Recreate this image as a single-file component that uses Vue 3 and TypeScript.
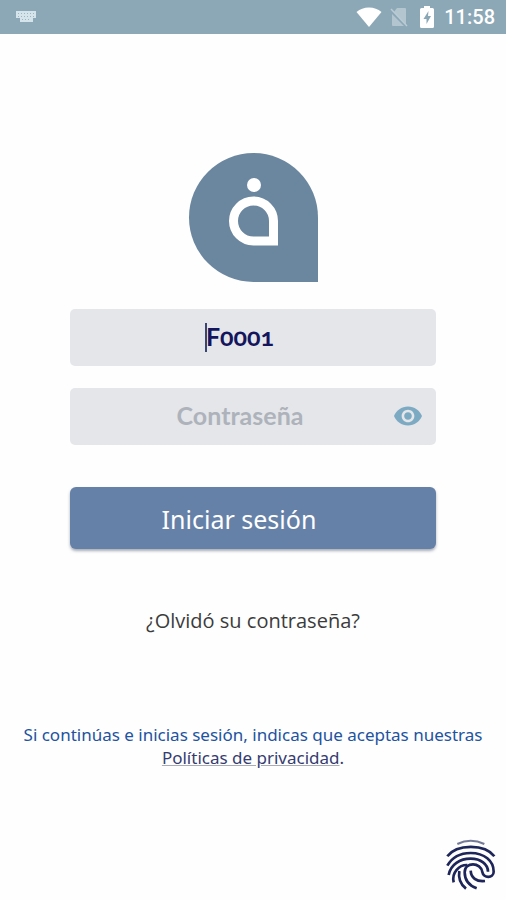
<script setup lang="ts">
import { ref } from 'vue'

const user = ref('F0001')
const password = ref('')
const showPassword = ref(false)
</script>

<template>
  <div class="screen">
    <header class="status">
      <svg class="keyboard" viewBox="0 0 20 12" aria-hidden="true">
        <path d="M0 0h20v7h-3v4H4V7H0z" fill="#d5e3ea" />
        <path d="M2 2.500h16M2 5.500h16M6 8.500h9" stroke="#9db5c1" stroke-width="1" stroke-dasharray="1 2" />
      </svg>
      <div class="indicators">
        <svg class="wifi" viewBox="0 0 26 20" aria-hidden="true">
          <path d="M13 20 .5 5C4 2 8 .5 13 .5S22 2 25.500 5z" fill="#fff" />
        </svg>
        <svg class="sim" viewBox="0 0 18 20" aria-hidden="true">
          <path d="M7 1h8q1 0 1 1v16L4 5zM2 7l12 12H3q-1 0-1-1z" fill="#b3c6d0" />
          <path d="M1 2l16 17" stroke="#b9cbd4" stroke-width="1.500" />
        </svg>
        <svg class="battery" viewBox="0 0 14 22" aria-hidden="true">
          <path d="M4 0h6v2h2.500Q14 2 14 3.500v17q0 1.500-1.500 1.500h-11Q0 22 0 20.500v-17Q0 2 1.500 2H4z" fill="#fff" />
          <path d="M8.500 5 3.500 13h3v5l4.500-8H8z" fill="#8aa7b5" />
        </svg>
        <span class="clock">11:58</span>
      </div>
    </header>

    <main class="content">
      <svg class="logo" viewBox="0 0 130 130" role="img" aria-label="Logo">
        <path d="M65.500 0A64.500 64.500 0 0 1 130 64.500V129H65.500A64.500 64.500 0 0 1 65.500 0z" fill="#6a879f" />
        <circle cx="66" cy="32" r="7" fill="#fff" />
        <path d="M65.500 48A20 20 0 0 1 85.500 68V88H65.500a20 20 0 0 1 0-40z" fill="none" stroke="#fff" stroke-width="9" />
      </svg>

      <form class="form" @submit.prevent>
        <div class="field">
          <input v-model="user" class="input user" type="text" aria-label="Usuario" />
          <span class="caret"></span>
        </div>
        <div class="field">
          <input
            v-model="password"
            class="input"
            :type="showPassword ? 'text' : 'password'"
            placeholder="Contraseña"
            aria-label="Contraseña"
          />
          <button class="eye" type="button" aria-label="Mostrar contraseña" @click="showPassword = !showPassword">
            <svg viewBox="1 4.500 22 15" aria-hidden="true">
              <path
                fill="#7daac3"
                d="M12 4.500C7 4.500 2.730 7.610 1 12c1.730 4.390 6 7.500 11 7.500s9.270-3.110 11-7.500c-1.730-4.390-6-7.500-11-7.500zM12 17c-2.760 0-5-2.240-5-5s2.240-5 5-5 5 2.240 5 5-2.240 5-5 5zm0-8c-1.660 0-3 1.340-3 3s1.340 3 3 3 3-1.340 3-3-1.340-3-3-3z"
              />
            </svg>
          </button>
        </div>
        <button class="submit" type="submit">Iniciar sesión</button>
      </form>

      <a class="forgot" href="#">¿Olvidó su contraseña?</a>

      <p class="terms">
        Si continúas e inicias sesión, indicas que aceptas nuestras
        <a class="policy" href="#">Políticas de privacidad</a><span class="dot">.</span>
      </p>
    </main>

    <footer class="footer">
      <button class="finger" type="button" aria-label="Usar huella">
        <svg viewBox="6 8 150 156" aria-hidden="true">
          <g fill="none" stroke="#1d2559" stroke-width="8">
            <path d="M40 23Q80 3 121 23" stroke="#767a99" stroke-width="6" />
            <path d="M10 60C38 22 123 22 151 60" />
            <path d="M10 88C26 60 50 50 80 50C121 50 149 74 149 106C149 126 118 127 115 107C111 77 62 76 62 108C62 132 76 148 98 156" />
            <path d="M14 116C20 84 48 67 80 67C110 67 132 84 132 106" />
            <path d="M29 138C22 108 46 85 70 86" />
            <path d="M46 104C42 128 52 146 66 157" />
            <path d="M80 103C81 124 97 137 123 134" />
          </g>
        </svg>
      </button>
    </footer>
  </div>
</template>

<style>
body {
  margin: 0;
  background: #fefefe;
}
</style>

<style scoped>
.screen {
  min-height: 100vh;
  display: flex;
  flex-direction: column;
  box-sizing: border-box;
  font-family: 'Noto Sans', 'Open Sans', sans-serif;
}

.status {
  display: flex;
  align-items: center;
  justify-content: space-between;
  height: 34px;
  padding: 0 11px 0 16px;
  background: #8ca8b6;
}

.keyboard {
  width: 20px;
  height: 12px;
}

.indicators {
  display: flex;
  align-items: center;
}

.wifi {
  width: 26px;
  height: 20px;
  margin-right: 8px;
}

.sim {
  width: 18px;
  height: 20px;
  margin-right: 12px;
}

.battery {
  width: 14px;
  height: 22px;
  margin-right: 10px;
}

.clock {
  color: #fff;
  font-family: Roboto, sans-serif;
  font-size: 20px;
  font-weight: 500;
  line-height: 36px;
}

.content {
  display: flex;
  flex-direction: column;
  align-items: center;
  padding-top: 119px;
}

.logo {
  width: 130px;
  height: 130px;
}

.form {
  display: flex;
  flex-direction: column;
  gap: 22px;
  width: 100%;
  box-sizing: border-box;
  margin-top: 26px;
  padding: 0 70px;
}

.field {
  position: relative;
}

.input {
  display: block;
  width: 100%;
  height: 57px;
  box-sizing: border-box;
  padding: 0 40px 4px 14px;
  border: 0;
  border-radius: 5px;
  outline: 0;
  background: #e4e6ea;
  color: #14155c;
  font-family: Lato, 'Noto Sans', sans-serif;
  font-size: 25px;
  font-weight: 700;
  text-align: center;
}

.user {
  font-variant-numeric: oldstyle-nums;
}

.input::placeholder {
  color: #aeb3bb;
  opacity: 1;
}

.caret {
  position: absolute;
  top: 14px;
  left: 37%;
  width: 2px;
  height: 29px;
  background: #3b4573;
}

.eye {
  position: absolute;
  top: 18px;
  right: 14px;
  width: 28px;
  height: 20px;
  padding: 0;
  border: 0;
  background: none;
}

.eye svg {
  display: block;
  width: 28px;
  height: 20px;
}

.submit {
  height: 62px;
  margin-top: 20px;
  padding: 2px 28px 0 0;
  border: 0;
  border-radius: 6px;
  background: #6581a8;
  box-shadow: 0 2px 3px rgba(40, 50, 80, 0.4);
  color: #fff;
  font-family: inherit;
  font-size: 25px;
}

.forgot {
  margin-top: 57px;
  color: #3c3c3c;
  font-family: 'Open Sans', 'Noto Sans', sans-serif;
  font-size: 20px;
  line-height: 30px;
  text-decoration: none;
}

.terms {
  margin: 87px 0 0;
  padding: 0 20px;
  color: #2253a0;
  font-size: 17px;
  line-height: 23px;
  text-align: center;
}

.policy {
  color: #353b70;
  text-decoration: underline;
  text-decoration-color: #a9abbb;
}

.dot {
  color: #353b70;
}

.footer {
  display: flex;
  justify-content: flex-end;
  margin-top: auto;
  padding: 0 10px 9px 0;
}

.finger {
  padding: 0;
  border: 0;
  background: none;
}

.finger svg {
  display: block;
  width: 50px;
  height: 52px;
}
</style>
